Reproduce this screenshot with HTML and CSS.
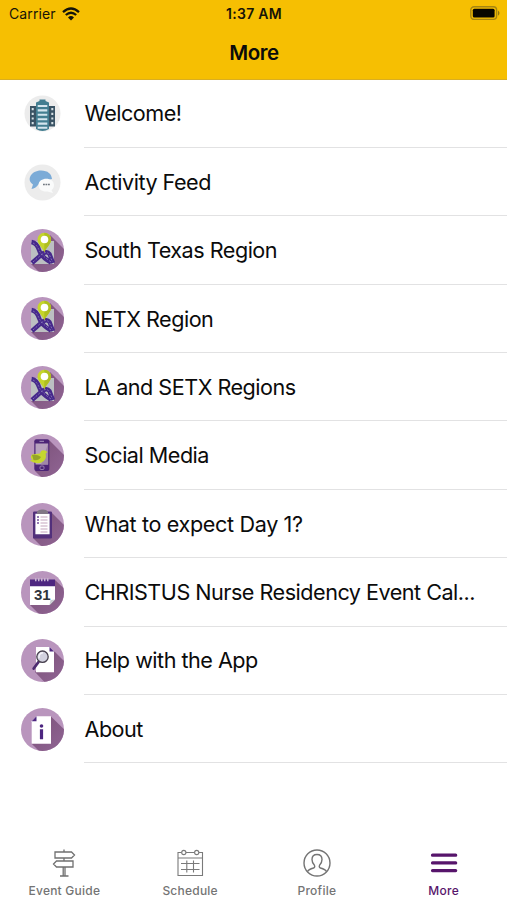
FILE: index.html
```html
<!DOCTYPE html>
<html lang="en">
<head>
<meta charset="utf-8">
<title>More</title>
<link rel="stylesheet" href="styles.css">
</head>
<body>
<svg width="0" height="0" class="defs">
  <defs>
    <linearGradient id="shade" x1="0" y1="0" x2="1" y2="1">
      <stop offset="0.2" stop-color="#80567f"/><stop offset="1" stop-color="#95699a"/>
    </linearGradient>
    <clipPath id="disc"><circle cx="21.5" cy="21.5" r="21.5"/></clipPath>
    <symbol id="map" viewBox="0 0 43 43">
      <g clip-path="url(#disc)">
        <rect width="43" height="43" fill="#b995bd"/>
        <path d="M29 6L50 27V50H25L10 35Z" fill="url(#shade)"/>
        <rect x="10" y="12" width="23" height="23" fill="#bcbfc2"/>
        <path d="M10.500 13Q16 14 18 21T30 33.500M11 34L20 26Q25.500 21 28.500 25L32 34" fill="none" stroke="#46288b" stroke-width="4.400"/>
        <path d="M12 14Q16 16 18 21T30 33M12 33L20 26Q25.500 21 28.500 26L31.500 33" fill="none" stroke="#9a8bc4" stroke-width=".7" stroke-dasharray="2 1.500"/>
        <path d="M23.300 23.500C22 19 16.500 15.500 16.500 10.500a6.800 6.800 0 0 1 13.600 0C30.100 15.500 24.600 19 23.300 23.500Z" fill="#c5d52b"/>
        <path d="M23.300 23.500V3.700a6.800 6.800 0 0 1 6.800 6.800C30.100 15.500 24.600 19 23.300 23.500Z" fill="#afbf20"/>
        <circle cx="23.500" cy="10.500" r="3.800" fill="#fff"/>
      </g>
    </symbol>
  </defs>
</svg>
<div class="screen">
  <header class="header">
    <div class="status">
      <div class="carrier"><span>Carrier</span>
        <svg class="wifi" viewBox="0 0 18 14"><path d="M1 5.100Q9-2 17 5.100M3.800 8Q9 3.500 14.200 8" fill="none" stroke="#15150a" stroke-width="2.300"/><path d="M6 10.400Q9 7.800 12 10.400L9 13.500Z" fill="#15150a"/></svg>
      </div>
      <div class="time">1:37 AM</div>
      <svg class="battery" viewBox="0 0 31 15"><rect x=".8" y=".8" width="25.800" height="12.600" rx="3.300" fill="none" stroke="#a58612" stroke-width="1.400"/><rect x="2.800" y="2.800" width="21.800" height="8.600" rx="1.500" fill="#080700"/><path d="M28 4.500Q31 7.100 28 9.700Z" fill="#92770d"/></svg>
    </div>
    <h1>More</h1>
  </header>
  <main class="list">
    <div class="row">
      <svg class="icon" viewBox="0 0 43 43"><circle cx="21.500" cy="21.500" r="18" fill="#ececec"/>
        <path d="M9 14h8v20.500H9zM26 14h8v20.500h-8z" fill="#3a5364"/>
        <path d="M15 10.500L18.500 9V7.500h6V9L28 10.500V37Q21.500 41 15 37Z" fill="#437e91"/>
        <path d="M16.700 14h9.600M16.700 18.400h9.600M16.700 22.800h9.600M16.700 27.200h9.600M16.700 31.600h9.600M16.700 35.800h9.600" stroke="#d4e5ee" stroke-width="2.100"/>
        <path d="M11.700 16v17M31.300 16v17" stroke="#d6e0e5" stroke-width="2" stroke-dasharray="2.200 2.500"/></svg>
      <span class="label">Welcome!</span></div>
    <div class="row">
      <svg class="icon" viewBox="0 0 43 43"><circle cx="21.500" cy="21.500" r="18" fill="#ececec"/>
        <path d="M10.500 28L12 23.500C5 19 10 9.500 20 9.500C27 9.500 30.500 13 31 18L21 20L17 24Q14.500 27.500 10.500 28Z" fill="#7babd7"/>
        <path d="M17.500 24C17.500 15.500 33 15.500 33 24C33 26.500 32 28 30.500 29L32 32L26.500 30.500C21 31 17.500 28.500 17.500 24Z" fill="#fafbfb"/>
        <path d="M22 23.500h7" stroke="#727981" stroke-width="1.400" stroke-dasharray="1.800 .7"/></svg>
      <span class="label">Activity Feed</span></div>
    <div class="row"><svg class="icon"><use href="#map"/></svg><span class="label">South Texas Region</span></div>
    <div class="row"><svg class="icon"><use href="#map"/></svg><span class="label">NETX Region</span></div>
    <div class="row"><svg class="icon"><use href="#map"/></svg><span class="label">LA and SETX Regions</span></div>
    <div class="row">
      <svg class="icon" viewBox="0 0 43 43"><g clip-path="url(#disc)"><rect width="43" height="43" fill="#b995bd"/>
        <path d="M28 6L50 28V50H27L14 37Z" fill="url(#shade)"/>
        <rect x="13.300" y="5.300" width="15" height="31.700" rx="2" fill="#4c2476"/>
        <rect x="14.500" y="9.500" width="12.600" height="21" fill="#b7a1bd"/><path d="M27.100 9.500V30.500H20Z" fill="#a187a8"/>
        <path d="M18.500 7.300h4.500" stroke="#a995bd"/><rect x="19" y="32" width="4" height="3.500" rx="1" fill="none" stroke="#a995bd" stroke-width=".8"/>
        <path d="M8.500 26.500L11.500 26Q8.500 23 11 20.500L19 19.500Q20 15 24 16.500L26.500 18L24.700 19.500Q26 26 20.500 28.500Q15 30.500 8.500 26.500Z" fill="#c5d72e"/>
        <path d="M11 21Q16 20 20 23Q17.500 27 12.500 26Z" fill="#95a429"/></g></svg>
      <span class="label">Social Media</span></div>
    <div class="row">
      <svg class="icon" viewBox="0 0 43 43"><g clip-path="url(#disc)"><rect width="43" height="43" fill="#b995bd"/>
        <path d="M30 9L50 29V50H27L12 35Z" fill="url(#shade)"/><rect x="12" y="8.500" width="19" height="27" rx="1.200" fill="#52307b"/>
        <path d="M14.400 10.800h14.200v20.500H14.400z" fill="#fff"/><path d="M16 8.500Q18 6.200 21.500 6.500Q25 6.200 27 8.500V11H16Z" fill="#817785"/>
        <path d="M19.500 14h7M19.500 17h7M19.500 20h7M19.500 23h7M19.500 26h7M19.500 29h7" stroke="#c4a5bd" stroke-width="1"/>
        <path d="M16 14h2M16 17h2M16 20h2" stroke="#745199" stroke-width="1.700"/></g></svg>
      <span class="label wide">What to expect Day 1?</span></div>
    <div class="row">
      <svg class="icon" viewBox="0 0 43 43"><g clip-path="url(#disc)"><rect width="43" height="43" fill="#b995bd"/>
        <path d="M34 9L50 24V50H25L9 34Z" fill="url(#shade)"/><rect x="9" y="9" width="25" height="25" fill="#fff"/><path d="M9 8.500h25v6.800H9z" fill="#4d2680"/>
        <path d="M14 8.700h15" stroke="#c9b6d2" stroke-width="3" stroke-dasharray="1.500 1.500"/>
        <text x="21.300" y="28.700" class="date">31</text><path d="M34 28.500V34H28.500Z" fill="#876389"/><path d="M34 28.500L29.500 29L28.500 34Z" fill="#c8ced2"/></g></svg>
      <span class="label">CHRISTUS Nurse Residency Event Cal...</span></div>
    <div class="row">
      <svg class="icon" viewBox="0 0 43 43"><g clip-path="url(#disc)"><rect width="43" height="43" fill="#b995bd"/>
        <path d="M33 12L50 29V50H30L14 33Z" fill="url(#shade)"/><path d="M15 8h13.500L33 12.500V33.300H15Z" fill="#fff"/><path d="M28.500 8L33 12.500H28.500Z" fill="#4d2680"/>
        <path d="M17.500 23L12.700 29.500" stroke="#4d2b70" stroke-width="2.800" stroke-linecap="round"/><circle cx="21.500" cy="17.700" r="5.700" fill="#d2d1df" stroke="#48414f" stroke-width="1.300"/>
        <path d="M18 19.200Q17.500 14.200 22 13.800" fill="none" stroke="#f5f4fa" stroke-width="1.500"/></g></svg>
      <span class="label">Help with the App</span></div>
    <div class="row">
      <svg class="icon" viewBox="0 0 43 43"><g clip-path="url(#disc)"><rect width="43" height="43" fill="#b995bd"/>
        <path d="M30 8.500L50 28V50H25L10.700 35.700Z" fill="url(#shade)"/><path d="M15.500 8.300H30V35.700H10.700V13.300Z" fill="#fff"/><path d="M15.500 8.300V13.300H10.700Z" fill="#4d2680"/>
        <circle cx="20.500" cy="18" r="1.800" fill="#4d2680"/><path d="M18.900 21.300H22.100V31.300H18.900Z" fill="#4d2680"/></g></svg>
      <span class="label">About</span></div>
  </main>
  <nav class="tabs">
    <div class="tab"><svg class="sign" viewBox="0 0 30 30"><g fill="none" stroke="#707070" stroke-width="1.300"><path d="M6 4h16.500l3 3-3 3H6zM24 13H7.500l-3 3 3 3H24z"/><path d="M15 1.500V4M15 10v3M14.200 19v8.500M16 19v8.500M11 28h8.500"/></g></svg><span>Event Guide</span></div>
    <div class="tab"><svg viewBox="0 0 30 30"><g fill="none" stroke="#7a7a7a" stroke-width="1.100"><path d="M6.500 4.500H3V27.500H27.500V4.500H24M11 4.500h8.500M3 10h24.500M6 15.500h18.500M6 21.500h18.500M11.800 12.500v12M18.500 12.500v12"/><circle cx="8.800" cy="4.500" r="2.100"/><circle cx="21.700" cy="4.500" r="2.100"/></g></svg><span>Schedule</span></div>
    <div class="tab"><svg viewBox="0 0 30 30"><g fill="none" stroke="#747474" stroke-width="1.400"><circle cx="15" cy="15" r="13"/><path d="M5.500 23.600Q6.500 21.500 11.500 20Q13.500 19 12.300 17Q10 14.500 10 11.500Q10 6.500 15 6.500Q20 6.500 20 11.500Q20 14.500 17.700 17Q16.500 19 18.500 20Q23.500 21.500 24.500 23.600"/></g></svg><span>Profile</span></div>
    <div class="tab active"><svg viewBox="0 0 30 30"><path d="M3.500 7.200h23.200M3.500 14.900h23.200M3.500 22.600h23.200" stroke="#57156b" stroke-width="3.200" stroke-linecap="round"/></svg><span>More</span></div>
  </nav>
</div>
</body>
</html>
```
FILE: styles.css
```css
* { box-sizing: border-box; }
body { margin: 0; background: #fff; font-family: Inter, "Liberation Sans", sans-serif; color: #0b0b0b; }
.defs { position: absolute; }
.screen { width: 507px; height: 900px; display: flex; flex-direction: column; overflow: hidden; }
.header { height: 79.6px; flex: none; background: #f6bf02; border-bottom: 1px solid #d9ae22; }
.status { height: 27px; padding: 0 6px 0 9px; display: grid; grid-template-columns: 1fr auto 1fr; align-items: center; font-size: 14px; color: #171407; }
.carrier { display: flex; align-items: center; gap: 6px; letter-spacing: .1px; }
.wifi { width: 18px; height: 14px; }
.time { font-weight: 600; letter-spacing: .3px; margin-right: 2px; }
.battery { width: 31px; height: 15px; justify-self: end; }
h1 { margin: 0; height: 51px; line-height: 51px; padding-left: 1px; text-align: center; font-size: 20.5px; font-weight: 600; letter-spacing: -.4px; }
.list { flex: none; }
.row { height: 68.38px; display: flex; align-items: center; padding-left: 21px; }
.icon { width: 43px; height: 43px; flex: none; margin-right: 20px; }
.label { flex: 1; height: 100%; padding: .2px 0 0 .5px; display: flex; align-items: center; border-bottom: 1.3px solid #e2e2e3; font-size: 21.6px; letter-spacing: -.5px; white-space: nowrap; }
.label.wide { letter-spacing: -.36px; }
.date { font: 700 15px "Liberation Sans", sans-serif; text-anchor: middle; fill: #30343b; }
.tabs { margin-top: auto; height: 54px; display: grid; grid-template-columns: repeat(4, 1fr); }
.tab { display: flex; flex-direction: column; align-items: center; font-size: 12px; font-weight: 500; color: #747474; letter-spacing: .23px; }
.tab:first-child { padding-left: 2px; }
.tab svg { width: 30px; height: 30px; margin-top: 2px; }
.tab span { line-height: 15px; margin-top: 5px; }
.tab.active { color: #57156b; }
```
